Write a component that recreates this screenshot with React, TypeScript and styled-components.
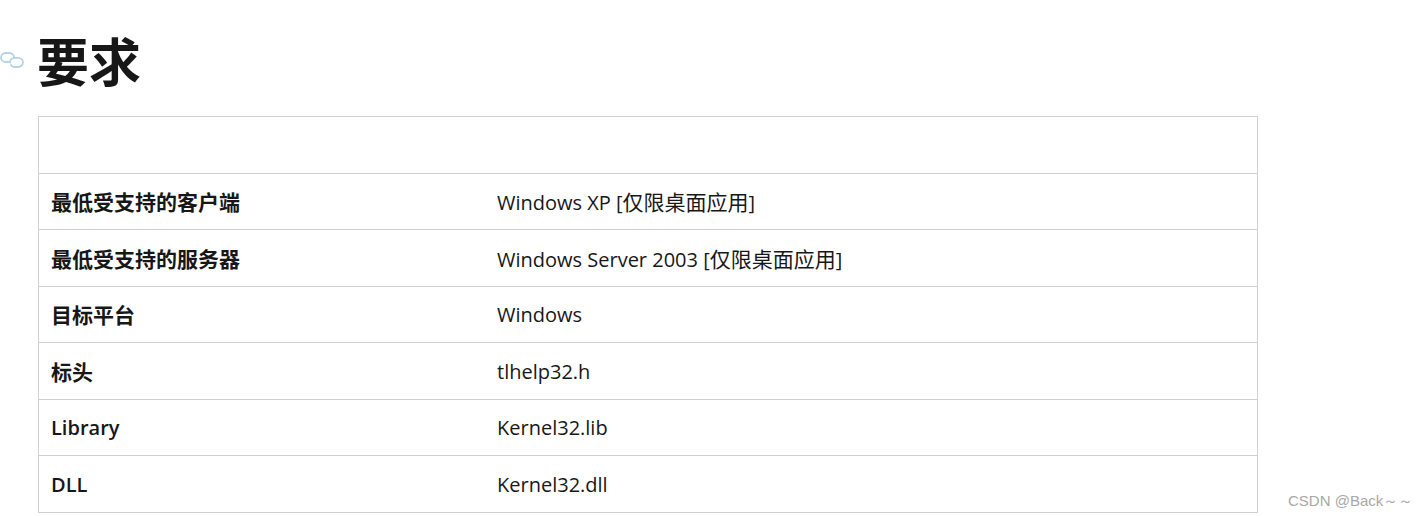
import React from "react"
import styled, {createGlobalStyle} from "styled-components"

const GlobalStyle = createGlobalStyle`
  html, body {
    margin: 0;
    padding: 0;
    background: #fff;
    overflow: hidden;
  }
  body {
    font-family: "Open Sans", "Noto Sans CJK SC", sans-serif;
    color: #171717;
  }
`

const Page = styled.main`
  position: relative;
  width: 1427px;
  height: 516px;
  box-sizing: border-box;
  padding: 23px 0 0 38px;
`

const Heading = styled.h2`
  position: relative;
  margin: 0 0 20px -1px;
  font-family: "Noto Sans CJK SC", sans-serif;
  font-size: 52px;
  line-height: 73px;
  font-weight: 700;
  color: #171717;
`

const Anchor = styled.svg`
  position: absolute;
  left: -37px;
  top: 29px;
  width: 24px;
  height: 16px;
  fill: none;
  stroke: #b3d3ea;
  stroke-width: 1.8;
  stroke-linecap: round;
`

const Table = styled.table`
  width: 1220px;
  border-collapse: collapse;
  table-layout: fixed;
  font-size: 20px;
`

const Row = styled.tr`
  height: 56.5px;
`

const Cell = styled.td<{$header?: boolean}>`
  box-sizing: border-box;
  border: 1px solid #d1d1d1;
  border-left: ${({$header}) => ($header ? "1px solid #d1d1d1" : "none")};
  border-right: ${({$header}) => ($header ? "none" : "1px solid #d1d1d1")};
  padding: 2px 12px 0 ${({$header}) => ($header ? "12px" : "12.5px")};
  width: ${({$header}) => ($header ? "446px" : "auto")};
  font-weight: ${({$header}) => ($header ? 600 : 400)};
  line-height: 28px;
  white-space: nowrap;
`

const Cjk = styled.span<{$bold?: boolean}>`
  font-family: "Noto Sans CJK SC", sans-serif;
  font-size: 21px;
  font-weight: ${({$bold}) => ($bold ? 700 : 400)};
`

const Watermark = styled.div`
  position: absolute;
  left: 1288px;
  top: 491px;
  font-family: "Liberation Sans", sans-serif;
  font-size: 15px;
  line-height: 20px;
  color: #a8a8a8;
`

const rows = [
  {label: "", value: null},
  {
    label: <Cjk $bold>最低受支持的客户端</Cjk>,
    value: (
      <>
        Windows XP [<Cjk>仅限桌面应用</Cjk>]
      </>
    ),
  },
  {
    label: <Cjk $bold>最低受支持的服务器</Cjk>,
    value: (
      <>
        Windows Server 2003 [<Cjk>仅限桌面应用</Cjk>]
      </>
    ),
  },
  {label: <Cjk $bold>目标平台</Cjk>, value: "Windows"},
  {label: <Cjk $bold>标头</Cjk>, value: "tlhelp32.h"},
  {label: "Library", value: "Kernel32.lib"},
  {label: "DLL", value: "Kernel32.dll"},
]

export default function App() {
  return (
    <Page>
      <GlobalStyle />
      <Heading>
        <Anchor viewBox="0 0 24 16">
          <path d="M8.5 10H5.5a4.5 4.5 0 0 1 0-9h4a4.5 4.5 0 0 1 4.5 4.5" />
          <path d="M10 10.5A4.7 4.7 0 0 1 14.5 5.8h3.8a4.6 4.6 0 0 1 0 9.2h-3.8A4.6 4.6 0 0 1 11 13" />
        </Anchor>
        要求
      </Heading>
      <Table>
        <tbody>
          {rows.map((row, i) => (
            <Row key={i}>
              <Cell $header>{row.label}</Cell>
              <Cell>{row.value}</Cell>
            </Row>
          ))}
        </tbody>
      </Table>
      <Watermark>CSDN @Back～～</Watermark>
    </Page>
  )
}
